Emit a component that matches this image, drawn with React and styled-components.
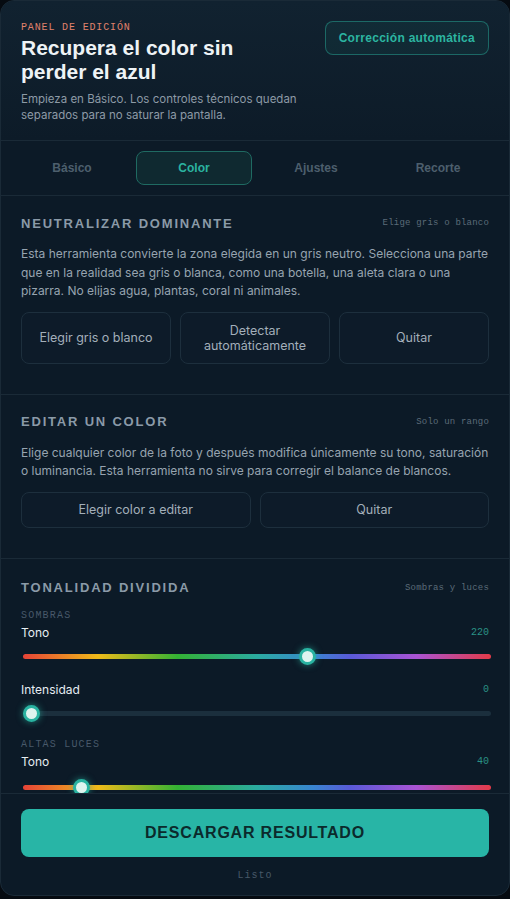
import React from 'react';
import styled, { createGlobalStyle } from 'styled-components';

const GlobalStyle = createGlobalStyle`
  body {
    margin: 0;
    background: #060b11;
    font-family: Inter, "Liberation Sans", sans-serif;
  }
`;

const Panel = styled.div`
  width: 510px;
  height: 896px;
  box-sizing: border-box;
  border: 1px solid #1a2a37;
  border-radius: 14px;
  background: #0c1a27;
  display: flex;
  flex-direction: column;
  overflow: hidden;
`;

const Header = styled.header`
  display: flex;
  justify-content: space-between;
  align-items: flex-start;
  padding: 19px 20px 17px 20px;
  border-bottom: 1px solid #1a2a37;
  background: linear-gradient(180deg, #112230 0%, #0d1b28 100%);
`;

const HeaderText = styled.div`
  max-width: 280px;
`;

const Eyebrow = styled.div`
  margin-top: 2px;
  font-family: "Liberation Mono", monospace;
  font-size: 10px;
  line-height: 12px;
  letter-spacing: 0.85px;
  color: #e0826c;
`;

const Title = styled.h1`
  margin: 2px 0 0;
  font-family: "Liberation Sans", Arial, sans-serif;
  font-size: 21px;
  line-height: 24px;
  font-weight: 700;
  color: #eef3f6;
`;

const Lead = styled.p`
  margin: 7px 0 0;
  font-size: 11.5px;
  line-height: 16px;
  color: #8d9aa6;
`;

const AutoButton = styled.button`
  height: 34px;
  padding: 0 13px;
  border-radius: 8px;
  border: 1px solid rgba(43, 179, 160, 0.45);
  background: rgba(43, 179, 160, 0.07);
  color: #2cb5a1;
  font-family: "Liberation Sans", Arial, sans-serif;
  font-size: 12px;
  font-weight: 700;
  letter-spacing: 0.3px;
  margin-top: 1px;
`;

const Tabs = styled.nav`
  display: grid;
  grid-template-columns: repeat(4, 1fr);
  gap: 6px;
  padding: 10px 13px;
  border-bottom: 1px solid #1a2a37;
`;

const Tab = styled.button`
  height: 34px;
  border-radius: 8px;
  border: 1px solid ${p => (p.$active ? '#1f6a62' : 'transparent')};
  background: ${p => (p.$active ? '#0f2930' : 'transparent')};
  color: ${p => (p.$active ? '#2bb3a0' : '#4d5f6d')};
  font-family: "Liberation Sans", Arial, sans-serif;
  font-size: 12px;
  font-weight: 700;
`;

const Scroll = styled.div`
  flex: 1;
  overflow: hidden;
`;

const Section = styled.section`
  padding: ${p => (p.$last ? 22 : 20)}px 20px 30px;
  border-bottom: ${p => (p.$last ? 'none' : '1px solid #1a2a37')};
`;

const SectionHead = styled.div`
  display: flex;
  justify-content: space-between;
  align-items: center;
  height: 14px;
`;

const SectionTitle = styled.h2`
  margin: 0;
  font-family: "Liberation Sans", Arial, sans-serif;
  font-size: 13px;
  font-weight: 700;
  letter-spacing: 1.8px;
  color: #8b9aa8;
`;

const Hint = styled.span`
  font-family: "Liberation Mono", monospace;
  font-size: 9px;
  letter-spacing: 0.2px;
  color: #5b6b78;
`;

const Text = styled.p`
  margin: 15px 0 0;
  font-size: 12px;
  line-height: 18.5px;
  color: #97a4b0;
`;

const ButtonRow = styled.div`
  display: grid;
  grid-template-columns: repeat(${p => p.$cols}, 1fr);
  gap: 9px;
  margin-top: 11px;
`;

const ToolButton = styled.button`
  height: ${p => p.$h}px;
  padding: 0 14px;
  border-radius: 8px;
  border: 1px solid #1d2f3d;
  background: #0d1b29;
  color: #a3afba;
  font-family: Inter, "Liberation Sans", sans-serif;
  font-size: 12.5px;
  line-height: 15px;
`;

const GroupLabel = styled.div`
  font-family: "Liberation Mono", monospace;
  font-size: 10px;
  line-height: 12px;
  letter-spacing: 1.2px;
  color: #48596a;
  margin-top: ${p => p.$mt}px;
`;

const Field = styled.div`
  margin-top: ${p => p.$mt}px;
`;

const FieldRow = styled.div`
  display: flex;
  justify-content: space-between;
  align-items: center;
  height: 14px;
`;

const FieldName = styled.span`
  font-size: 12px;
  color: #e6edf2;
`;

const FieldValue = styled.span`
  font-family: "Liberation Mono", monospace;
  font-size: 10px;
  color: #2a9185;
`;

const Slider = styled.div`
  position: relative;
  height: 16px;
  margin: ${p => p.$mt}px -2px 0 2px;
  display: flex;
  align-items: center;
`;

const Track = styled.div`
  flex: 1;
  height: 5px;
  border-radius: 3px;
  background: ${p =>
    p.$hue
      ? 'linear-gradient(90deg, hsl(4,78%,56%) 0%, hsl(45,88%,52%) 16%, hsl(120,55%,45%) 33%, hsl(175,60%,42%) 50%, hsl(210,62%,52%) 62%, hsl(240,62%,60%) 70%, hsl(280,60%,58%) 84%, hsl(355,75%,56%) 100%)'
      : '#1b2f3d'};
`;

const Thumb = styled.div`
  position: absolute;
  top: -1px;
  width: 17px;
  height: 17px;
  margin-left: -8.5px;
  box-sizing: border-box;
  border-radius: 50%;
  background: #def4ef;
  border: 3px solid #29b3a1;
  box-shadow: 0 0 7px rgba(41, 179, 161, 0.65);
`;

const Footer = styled.footer`
  padding: 15px 20px 13px;
  border-top: 1px solid #1a2a37;
  display: flex;
  flex-direction: column;
  align-items: center;
`;

const Download = styled.button`
  width: 100%;
  height: 48px;
  border: none;
  border-radius: 8px;
  background: #28b5a6;
  color: #0b2a2c;
  font-family: "Liberation Sans", Arial, sans-serif;
  font-size: 16px;
  font-weight: 700;
  letter-spacing: 0.8px;
`;

const Status = styled.div`
  margin-top: 13px;
  font-family: "Liberation Mono", monospace;
  font-size: 10px;
  line-height: 12px;
  letter-spacing: 1px;
  color: #475867;
`;

const RangeField = ({ label, value, max, hue, mt, gap = 9 }) => {
  const pct = value / max;
  return (
    <Field $mt={mt}>
      <FieldRow>
        <FieldName>{label}</FieldName>
        <FieldValue>{value}</FieldValue>
      </FieldRow>
      <Slider $mt={gap}>
        <Track $hue={hue} />
        <Thumb style={{ left: `calc(8px + (100% - 16px) * ${pct})` }} />
      </Slider>
    </Field>
  );
};

const tabs = ['Básico', 'Color', 'Ajustes', 'Recorte'];

const App = () => {
  return (
    <>
      <GlobalStyle />
      <Panel>
        <Header>
          <HeaderText>
            <Eyebrow>PANEL DE EDICIÓN</Eyebrow>
            <Title>Recupera el color sin perder el azul</Title>
            <Lead>
              Empieza en Básico. Los controles técnicos quedan separados para no saturar la pantalla.
            </Lead>
          </HeaderText>
          <AutoButton>Corrección automática</AutoButton>
        </Header>

        <Tabs>
          {tabs.map(t => (
            <Tab key={t} $active={t === 'Color'}>{t}</Tab>
          ))}
        </Tabs>

        <Scroll>
          <Section>
            <SectionHead>
              <SectionTitle>NEUTRALIZAR DOMINANTE</SectionTitle>
              <Hint>Elige gris o blanco</Hint>
            </SectionHead>
            <Text>
              Esta herramienta convierte la zona elegida en un gris neutro. Selecciona una parte
              que en la realidad sea gris o blanca, como una botella, una aleta clara o una
              pizarra. No elijas agua, plantas, coral ni animales.
            </Text>
            <ButtonRow $cols={3}>
              <ToolButton $h={52}>Elegir gris o blanco</ToolButton>
              <ToolButton $h={52}>Detectar automáticamente</ToolButton>
              <ToolButton $h={52}>Quitar</ToolButton>
            </ButtonRow>
          </Section>

          <Section>
            <SectionHead>
              <SectionTitle>EDITAR UN COLOR</SectionTitle>
              <Hint>Solo un rango</Hint>
            </SectionHead>
            <Text>
              Elige cualquier color de la foto y después modifica únicamente su tono, saturación
              o luminancia. Esta herramienta no sirve para corregir el balance de blancos.
            </Text>
            <ButtonRow $cols={2}>
              <ToolButton $h={36}>Elegir color a editar</ToolButton>
              <ToolButton $h={36}>Quitar</ToolButton>
            </ButtonRow>
          </Section>

          <Section $last>
            <SectionHead>
              <SectionTitle>TONALIDAD DIVIDIDA</SectionTitle>
              <Hint>Sombras y luces</Hint>
            </SectionHead>
            <GroupLabel $mt={15}>SOMBRAS</GroupLabel>
            <RangeField label="Tono" value={220} max={360} hue mt={4} />
            <RangeField label="Intensidad" value={0} max={100} mt={18} />
            <GroupLabel $mt={17}>ALTAS LUCES</GroupLabel>
            <RangeField label="Tono" value={40} max={360} hue mt={4} gap={11} />
          </Section>
        </Scroll>

        <Footer>
          <Download>DESCARGAR RESULTADO</Download>
          <Status>Listo</Status>
        </Footer>
      </Panel>
    </>
  );
};

export default App;
